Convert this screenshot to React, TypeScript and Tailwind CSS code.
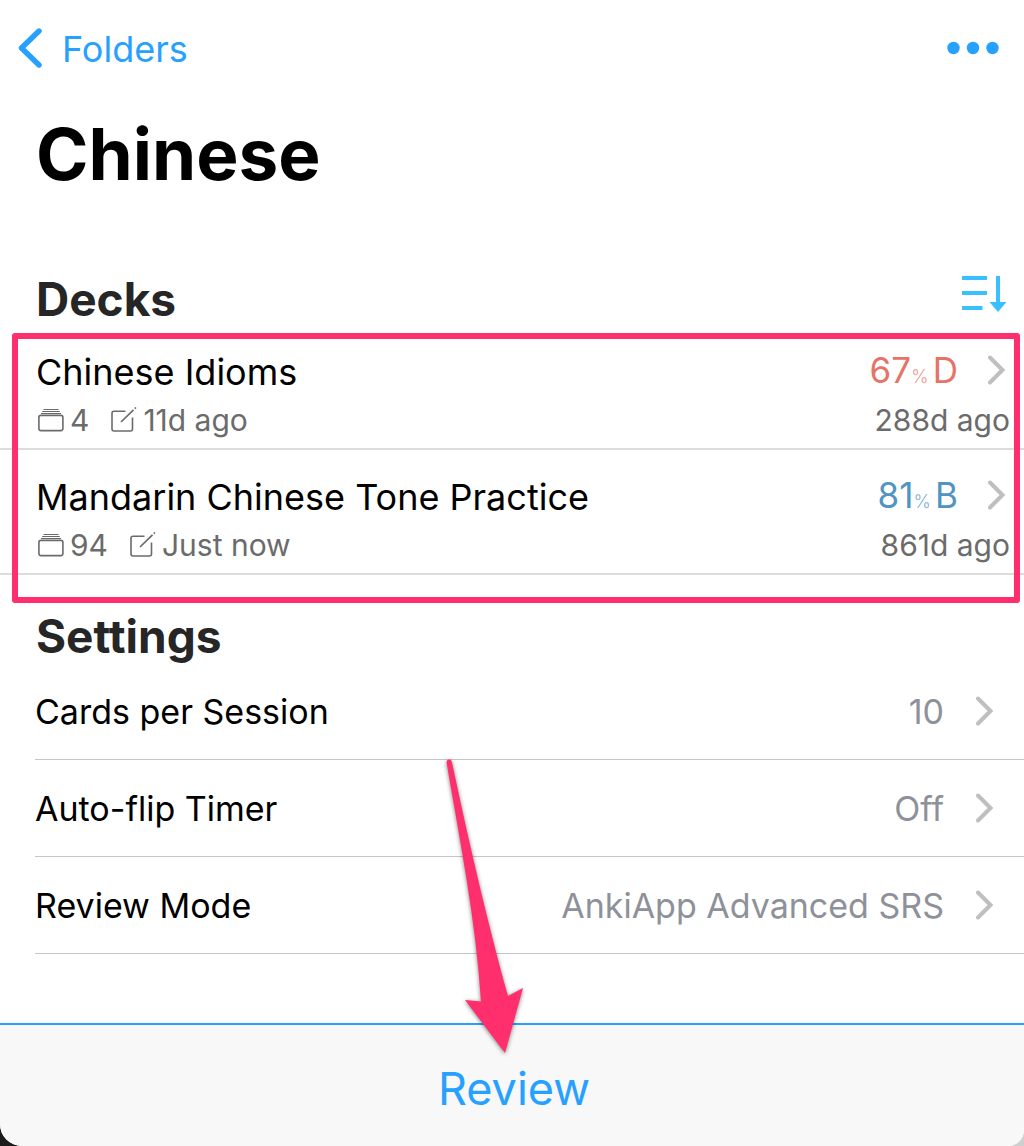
import React from "react";

type Deck = {
  name: string;
  cards: number;
  edited: string;
  score: number;
  grade: string;
  scoreColor: string;
  reviewed: string;
};

const decks: Deck[] = [
  {
    name: "Chinese Idioms",
    cards: 4,
    edited: "11d ago",
    score: 67,
    grade: "D",
    scoreColor: "text-[#e57366]",
    reviewed: "288d ago",
  },
  {
    name: "Mandarin Chinese Tone Practice",
    cards: 94,
    edited: "Just now",
    score: 81,
    grade: "B",
    scoreColor: "text-[#5094c4]",
    reviewed: "861d ago",
  },
];

const settings = [
  { label: "Cards per Session", value: "10" },
  { label: "Auto-flip Timer", value: "Off" },
  { label: "Review Mode", value: "AnkiApp Advanced SRS" },
];

const Chevron = () => (
  <svg width="18" height="30" viewBox="0 0 18 30" fill="none" aria-hidden="true">
    <path
      d="M2 2.5 14.5 15 2 27.5"
      stroke="#bfbfbf"
      strokeWidth="4"
      strokeLinecap="round"
    />
  </svg>
);

const CardsIcon = () => (
  <svg width="26" height="24" viewBox="0 0 26 24" fill="none" stroke="#6b6b6b" aria-hidden="true">
    <rect x="0.9" y="7.4" width="24" height="15.2" rx="2" strokeWidth="1.6" />
    <path d="M5.5 1.5h15M4.2 3.5h17.6M3 5.5h20" strokeWidth="1" />
  </svg>
);

const EditIcon = () => (
  <svg width="26" height="25" viewBox="0 0 26 25" fill="none" stroke="#6b6b6b" aria-hidden="true">
    <path
      d="M14.5 4.2H3a2 2 0 0 0-2 2V22a2 2 0 0 0 2 2h16.5a2 2 0 0 0 2-2V10.5"
      strokeWidth="1.6"
    />
    <path d="M10 15 22.5 2.8M23.8 1.6l1.1-1.1" strokeWidth="1.7" />
  </svg>
);

const Header = () => (
  <header className="flex h-24 items-center justify-between pl-4 pr-6 text-[#27a1ff]">
    <a href="#folders" className="flex items-center gap-5 text-4xl">
      <svg width="26" height="42" viewBox="0 0 26 42" fill="none" aria-hidden="true">
        <path
          d="M23 4 5.5 21 23 38"
          stroke="currentColor"
          strokeWidth="5.4"
          strokeLinecap="round"
          strokeLinejoin="round"
        />
      </svg>
      <span className="pt-0.5">Folders</span>
    </a>
    <button aria-label="More options">
      <svg width="54" height="14" viewBox="0 0 54 14" fill="currentColor" aria-hidden="true">
        <circle cx="7.5" cy="7" r="6.2" />
        <circle cx="27" cy="7" r="6.2" />
        <circle cx="46.5" cy="7" r="6.2" />
      </svg>
    </button>
  </header>
);

const DeckRow = ({ deck }: { deck: Deck }) => (
  <li className="border-b-2 border-[#dcdcdc]">
    <a href="#deck" className="flex h-[123px] items-end justify-between pb-1 pl-9 pr-[14px]">
      <div>
        <p className="text-4xl leading-[48px] text-black">{deck.name}</p>
        <p className="flex items-center gap-1.5 pl-0.5 text-[30px] leading-[48px] text-[#6b6b6b]">
          <CardsIcon />
          {deck.cards}
          <span className="ml-4 pb-0.5">
            <EditIcon />
          </span>
          {deck.edited}
        </p>
      </div>
      <div>
        <div className="flex items-center justify-end">
          <p className={`flex items-baseline text-[35px] leading-[52px] ${deck.scoreColor}`}>
            {deck.score}
            <span className="text-lg opacity-60">%</span>
            <span className="ml-1">{deck.grade}</span>
          </p>
          <span className="ml-[30px] mr-1">
            <Chevron />
          </span>
        </div>
        <p className="text-right text-[30px] leading-[48px] text-[#6b6b6b]">{deck.reviewed}</p>
      </div>
    </a>
  </li>
);

const App = () => {
  return (
    <div className="min-h-screen bg-[linear-gradient(to_right,#1c1c1c_50%,#cfcfcf_50%)] font-['Inter',sans-serif]">
      <div className="flex min-h-screen flex-col overflow-hidden rounded-bl-[22px] rounded-br-[16px] bg-white">
        <Header />
        <main className="flex-1">
          <h1 className="pl-9 pt-[10px] text-[71px] font-bold leading-[96px] text-black">
            Chinese
          </h1>

          <section className="mt-[67px]">
            <div className="flex h-14 items-center justify-between pl-9 pr-4">
              <h2 className="pt-1 text-[46px] font-bold leading-[56px] text-[#262626]">Decks</h2>
              <button aria-label="Sort decks" className="pb-1">
                <svg width="46" height="40" viewBox="0 0 46 40" fill="#3bc0ff" aria-hidden="true">
                  <path d="M0 1h25v4H0zM0 16h25v4H0zM0 31h20.5v4H0zM34 1h4v26h6.5L36 37l-8.5-10H34z" />
                </svg>
              </button>
            </div>
            <div className="relative">
              <ul>
                {decks.map((deck) => (
                  <DeckRow key={deck.name} deck={deck} />
                ))}
              </ul>
              {/* highlight around the deck list */}
              <div className="pointer-events-none absolute -bottom-7 left-3 right-1 top-2 rounded-[3px] border-[6px] border-[#ff2f6d]" />
            </div>
          </section>

          <section>
            <h2 className="pl-9 pt-[34px] text-[46px] font-bold leading-[54px] text-[#262626]">
              Settings
            </h2>
            <ul className="pl-[35px]">
              {settings.map((item) => (
                <li key={item.label} className="border-b border-[#c6c6c8]">
                  <button className="flex h-24 w-full items-center justify-between pr-[30px] text-[34px]">
                    <span className="text-black">{item.label}</span>
                    <span className="flex items-center gap-8 text-[#8e9199]">
                      {item.value}
                      <Chevron />
                    </span>
                  </button>
                </li>
              ))}
            </ul>
          </section>
        </main>
        <footer className="relative border-t-2 border-[#27a1ff] bg-[#f8f8f8]">
          <button className="h-[121px] w-full pl-1 pt-1.5 text-[45px] text-[#27a1ff]">
            Review
          </button>
          {/* pointer to the review button */}
          <svg
            className="pointer-events-none absolute bottom-[88px] left-1/2 -ml-[72px] drop-shadow-[0_1px_2px_rgba(0,0,0,0.5)]"
            width="90"
            height="300"
            viewBox="0 0 90 300"
            fill="#ff2f6d"
            aria-hidden="true"
          >
            <path d="M6.5 4a2.7 2.7 0 0 1 5.3-.5C27 75 46 159 68 238l15-8-18 65-40-53 16 1.5C36 163 20 84 6.5 4z" />
          </svg>
        </footer>
      </div>
    </div>
  );
};

export default App;
